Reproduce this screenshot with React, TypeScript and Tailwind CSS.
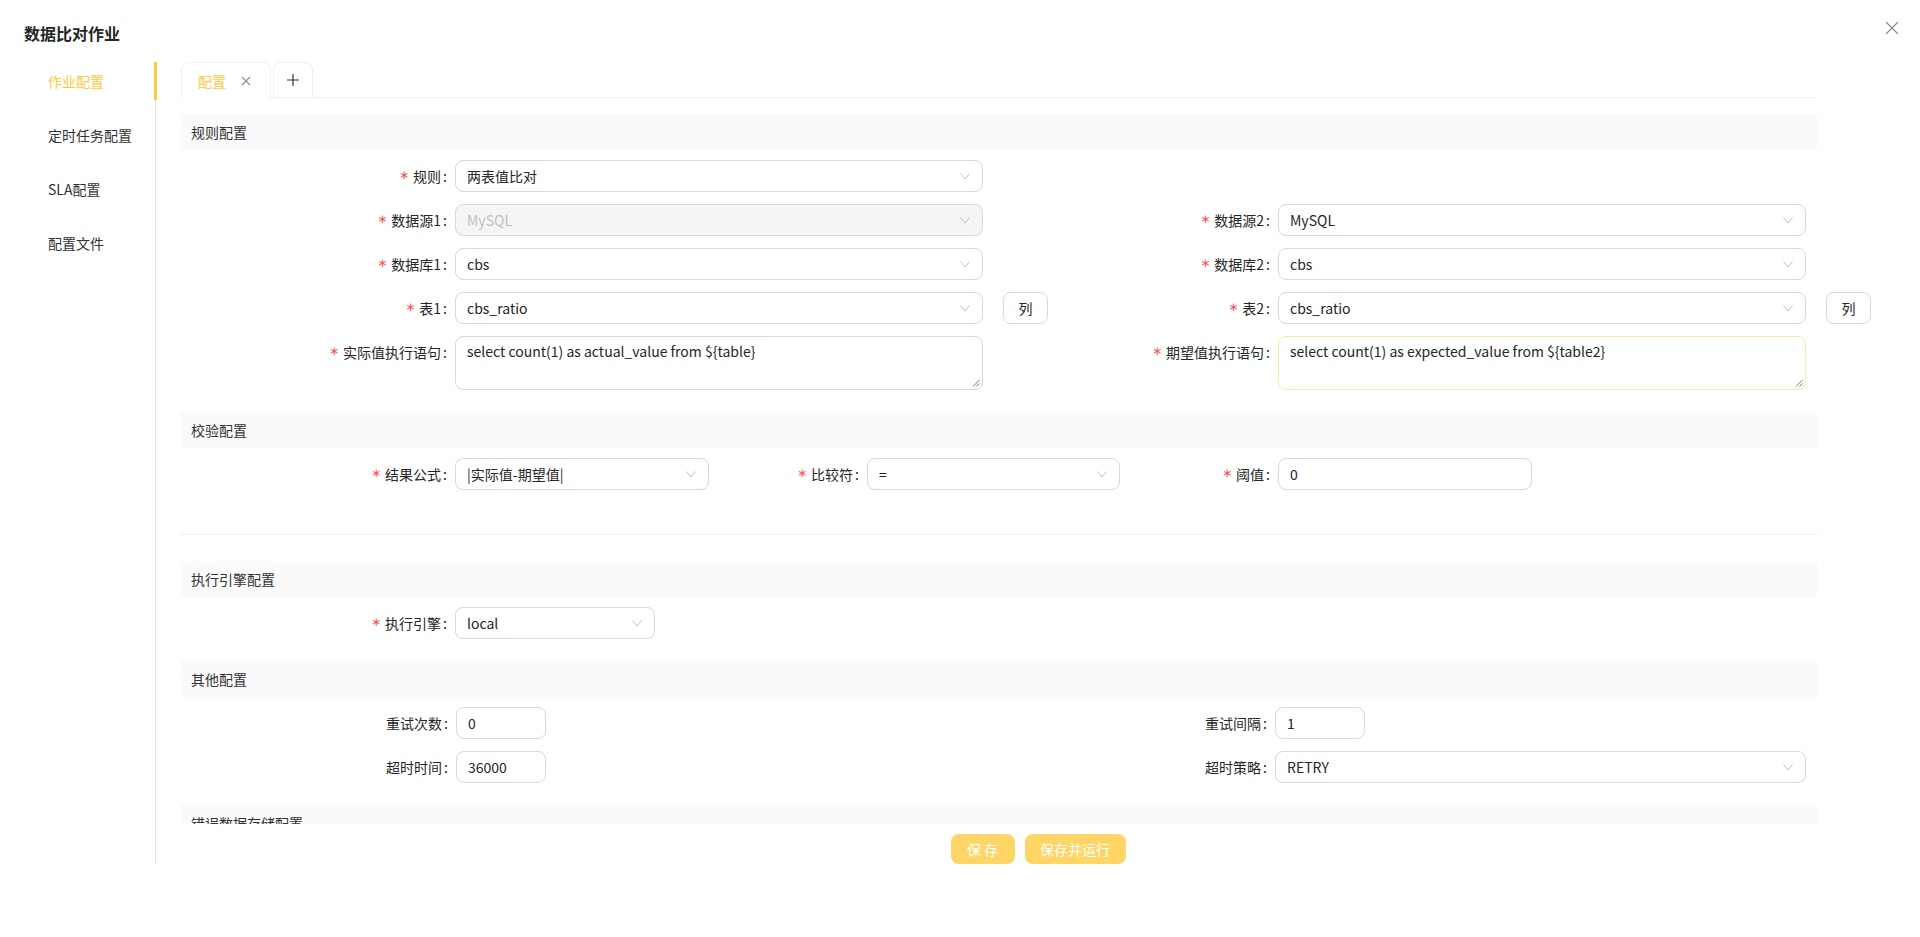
import React from "react";

const Chevron = () => (
  <svg width="12" height="12" viewBox="0 0 12 12" fill="none" stroke="#bfbfbf" strokeWidth="1">
    <path d="M1.5 3.5 L6 9 L10.5 3.5" />
  </svg>
);

const Label = ({ text, w, required = true }: { text: string; w: string; required?: boolean }) => (
  <div className={`${w} shrink-0 h-8 flex items-center justify-end text-sm text-[#262626]`}>
    {required && <span className="mr-1 text-[#ff4d4f] text-[12px] font-['DejaVu_Sans',sans-serif]">∗</span>}
    <span>{text}</span>
    <span className="ml-[2px] mr-2">:</span>
  </div>
);

const Select = ({ value, w, disabled = false }: { value: string; w: string; disabled?: boolean }) => (
  <div
    className={`${w} shrink-0 h-8 flex items-center justify-between pl-[11px] pr-[11px] border border-[#d9d9d9] rounded-lg text-sm ${
      disabled ? "bg-[#f5f5f5] text-[#bfbfbf]" : "bg-white text-[#262626]"
    }`}
  >
    <span>{value}</span>
    <Chevron />
  </div>
);

const Input = ({ value, w }: { value: string; w: string }) => (
  <div className={`${w} shrink-0 h-8 flex items-center px-[11px] border border-[#d9d9d9] rounded-lg text-sm text-[#262626] bg-white`}>
    {value}
  </div>
);

const TextArea = ({ value, border }: { value: string; border: string }) => (
  <div className={`relative w-[528px] h-[54px] shrink-0 px-[11px] py-1 border ${border} rounded-lg text-sm text-[#262626] bg-white`}>
    {value}
    <svg className="absolute right-[2px] bottom-[2px]" width="8" height="8" viewBox="0 0 8 8" stroke="#777" strokeWidth="1">
      <path d="M1 7.5 L7.5 1 M4.5 7.5 L7.5 4.5" />
    </svg>
  </div>
);

const ColButton = () => (
  <div className="ml-5 w-[45px] h-8 shrink-0 flex items-center justify-center border border-[#d9d9d9] rounded-lg text-sm text-[#262626]">
    列
  </div>
);

const SectionHeader = ({ title, className = "" }: { title: string; className?: string }) => (
  <div className={`w-[1636px] h-9 shrink-0 bg-[#fafafa] flex items-center px-[10px] text-sm text-[#333] ${className}`}>{title}</div>
);

const navItems = ["作业配置", "定时任务配置", "SLA配置", "配置文件"];

export default function App() {
  return (
    <div className="w-[1920px] h-[937px] bg-white relative overflow-hidden font-['Noto_Sans_CJK_SC',sans-serif] leading-[22px]">
      <div className="h-[62px] flex items-center pl-6 pt-1">
        <h1 className="text-base font-semibold text-[#262626]">数据比对作业</h1>
      </div>
      <svg className="absolute top-[21px] right-[21px]" width="14" height="14" viewBox="0 0 14 14" stroke="#8c8c8c" strokeWidth="1.3">
        <path d="M1 1 L13 13 M13 1 L1 13" />
      </svg>

      <div className="flex">
        <aside className="w-[155px] shrink-0 flex flex-col gap-4">
          {navItems.map((item, i) => (
            <div
              key={item}
              className={`relative h-[38px] flex items-center pl-12 text-sm ${i === 0 ? "text-[#ffc940]" : "text-[#333]"}`}
            >
              {item}
              {i === 0 && <span className="absolute right-[-2px] top-0 bottom-0 w-[3px] bg-[#ffc940]" />}
            </div>
          ))}
        </aside>

        <main className="flex-1 min-w-0 h-[802px] border-l border-[#e3e3e3] flex flex-col">
          <div className="pl-[25px] pr-[104px]">
            <div className="h-9 flex items-end gap-[2px] border-b border-[#f0f0f0]">
              <div className="w-[90px] h-[36px] -mb-px bg-white border border-b-0 border-[#f0f0f0] rounded-t-lg flex items-center pl-4 text-sm text-[#ffc940]">
                配置
                <svg className="ml-[15px]" width="10" height="10" viewBox="0 0 10 10" stroke="#8c8c8c" strokeWidth="1.1">
                  <path d="M1 1 L9 9 M9 1 L1 9" />
                </svg>
              </div>
              <div className="w-10 h-[35px] border border-b-0 border-[#f0f0f0] rounded-t-lg flex items-center justify-center">
                <svg width="14" height="14" viewBox="0 0 14 14" stroke="#333" strokeWidth="1.2">
                  <path d="M7 1 V13 M1 7 H13" />
                </svg>
              </div>
            </div>
          </div>

          <div className="h-[726px] overflow-hidden flex flex-col pl-[25px]">
            <SectionHeader title="规则配置" className="mt-4" />
            <div className="mt-[10px] flex flex-col gap-3">
              <div className="flex">
                <Label text="规则" w="w-[274px]" />
                <Select value="两表值比对" w="w-[528px]" />
              </div>
              <div className="flex">
                <div className="w-[818px] shrink-0 flex">
                  <Label text="数据源1" w="w-[274px]" />
                  <Select value="MySQL" w="w-[528px]" disabled />
                </div>
                <div className="flex">
                  <Label text="数据源2" w="w-[279px]" />
                  <Select value="MySQL" w="w-[528px]" />
                </div>
              </div>
              <div className="flex">
                <div className="w-[818px] shrink-0 flex">
                  <Label text="数据库1" w="w-[274px]" />
                  <Select value="cbs" w="w-[528px]" />
                </div>
                <div className="flex">
                  <Label text="数据库2" w="w-[279px]" />
                  <Select value="cbs" w="w-[528px]" />
                </div>
              </div>
              <div className="flex">
                <div className="w-[818px] shrink-0 flex">
                  <Label text="表1" w="w-[274px]" />
                  <Select value="cbs_ratio" w="w-[528px]" />
                  <ColButton />
                </div>
                <div className="flex">
                  <Label text="表2" w="w-[279px]" />
                  <Select value="cbs_ratio" w="w-[528px]" />
                  <ColButton />
                </div>
              </div>
              <div className="flex items-start">
                <div className="w-[818px] shrink-0 flex items-start">
                  <Label text="实际值执行语句" w="w-[274px]" />
                  <TextArea value="select count(1) as actual_value from ${table}" border="border-[#d9d9d9]" />
                </div>
                <div className="flex items-start">
                  <Label text="期望值执行语句" w="w-[279px]" />
                  <TextArea value="select count(1) as expected_value from ${table2}" border="border-[#ffe9a8]" />
                </div>
              </div>
            </div>

            <SectionHeader title="校验配置" className="mt-[22px]" />
            <div className="mt-[10px] flex">
              <Label text="结果公式" w="w-[274px]" />
              <Select value="|实际值-期望值|" w="w-[254px]" />
              <Label text="比较符" w="w-[158px]" />
              <Select value="=" w="w-[253px]" />
              <Label text="阈值" w="w-[158px]" />
              <Input value="0" w="w-[254px]" />
            </div>

            <div className="mt-[44px] w-[1636px] h-px shrink-0 bg-[#f0f0f0]" />

            <SectionHeader title="执行引擎配置" className="mt-[26px]" />
            <div className="mt-[10px] flex">
              <Label text="执行引擎" w="w-[274px]" />
              <Select value="local" w="w-[200px]" />
            </div>

            <SectionHeader title="其他配置" className="mt-[22px]" />
            <div className="mt-[10px] flex flex-col gap-3">
              <div className="flex">
                <div className="w-[818px] shrink-0 flex">
                  <Label text="重试次数" w="w-[275px]" required={false} />
                  <Input value="0" w="w-[90px]" />
                </div>
                <div className="flex">
                  <Label text="重试间隔" w="w-[276px]" required={false} />
                  <Input value="1" w="w-[90px]" />
                </div>
              </div>
              <div className="flex">
                <div className="w-[818px] shrink-0 flex">
                  <Label text="超时时间" w="w-[275px]" required={false} />
                  <Input value="36000" w="w-[90px]" />
                </div>
                <div className="flex">
                  <Label text="超时策略" w="w-[276px]" required={false} />
                  <Select value="RETRY" w="w-[531px]" />
                </div>
              </div>
            </div>

            <SectionHeader title="错误数据存储配置" className="mt-[22px]" />
          </div>

          <div className="mt-[10px] flex justify-center gap-[10px]">
            <div className="w-16 h-[30px] rounded-lg bg-[#ffd666] text-white text-sm flex items-center justify-center">保 存</div>
            <div className="w-[101px] h-[30px] rounded-lg bg-[#ffd666] text-white text-sm flex items-center justify-center">保存并运行</div>
          </div>
        </main>
      </div>
    </div>
  );
}
